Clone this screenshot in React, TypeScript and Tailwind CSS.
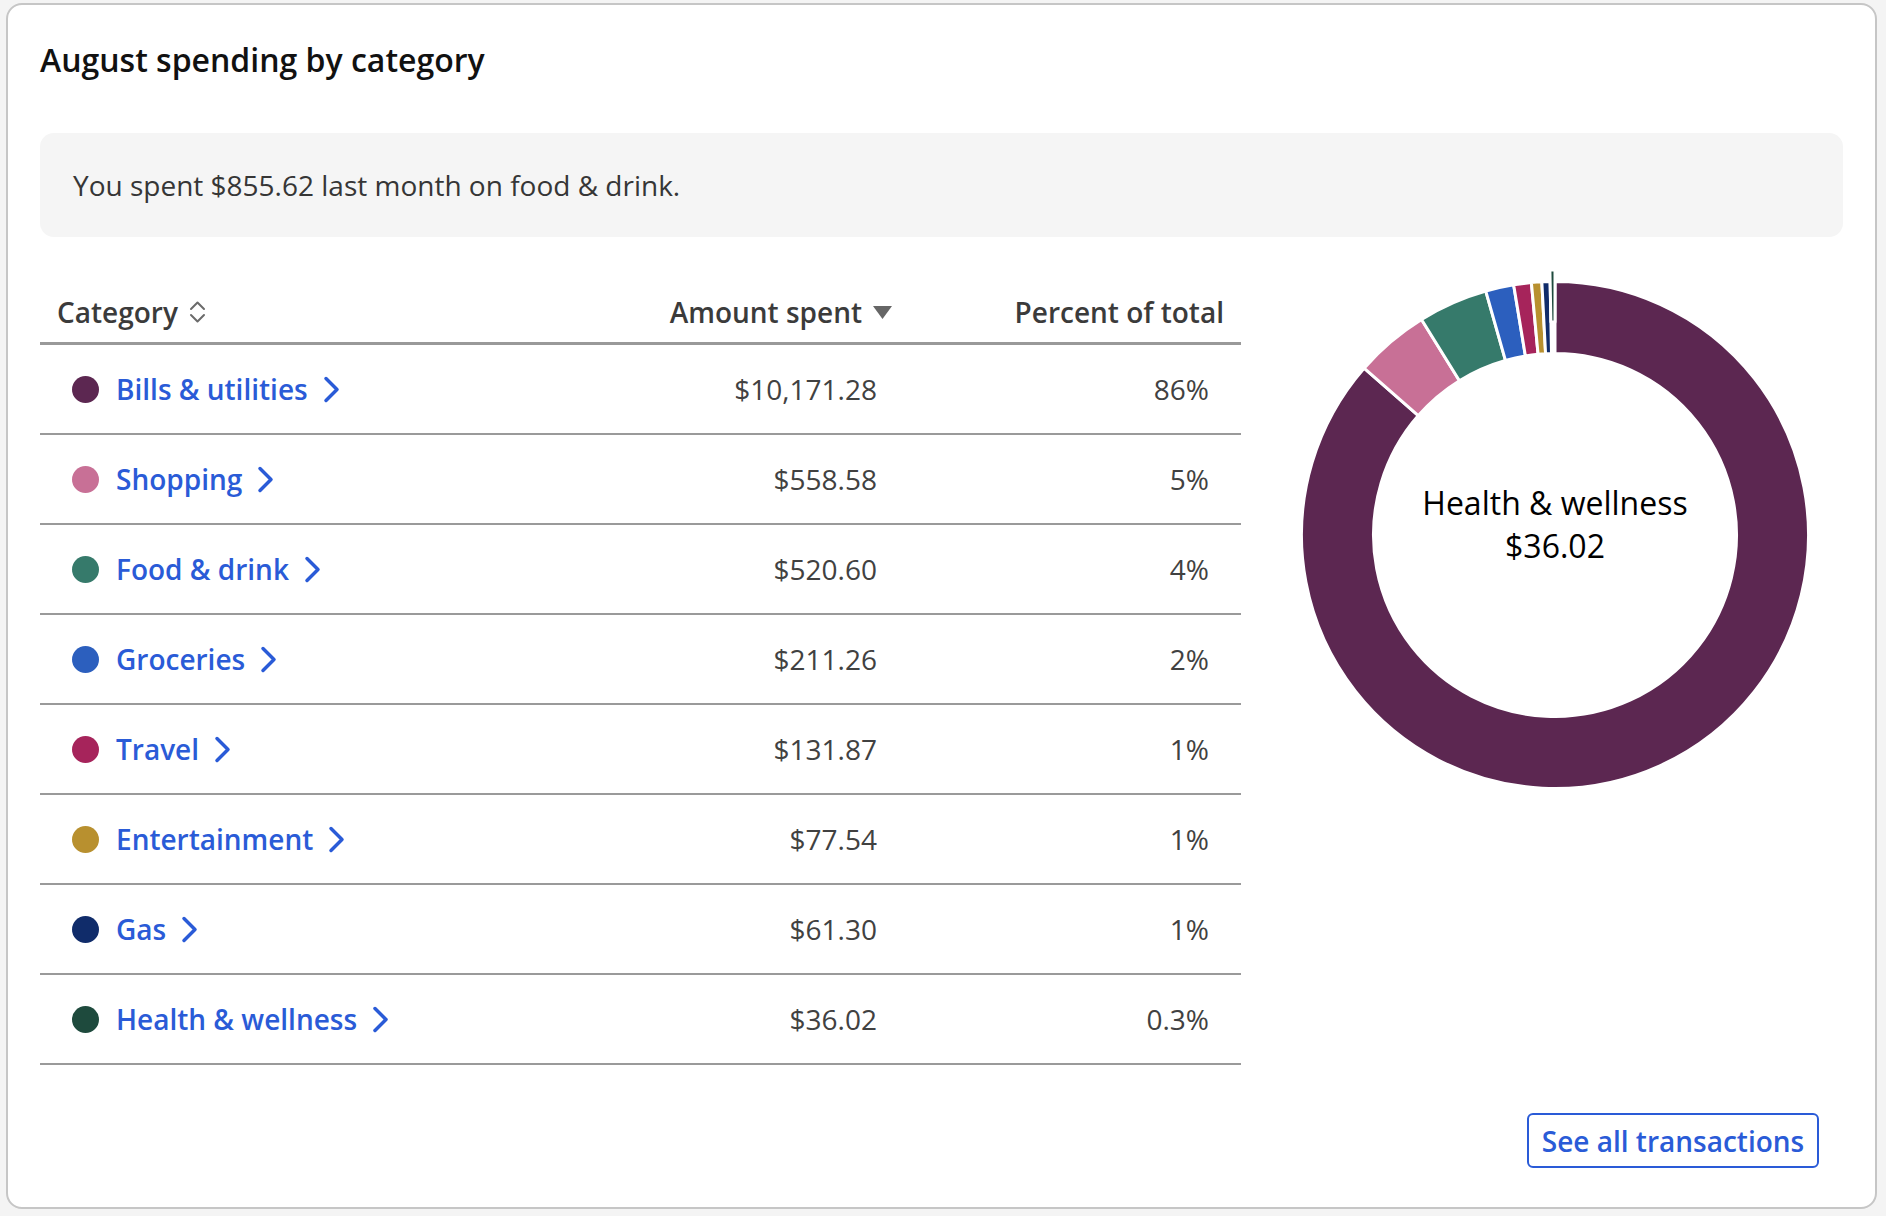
import React from "react";

const categories = [
  { name: "Bills & utilities", amount: "$10,171.28", value: 10171.28, pct: "86%", color: "#5c2751" },
  { name: "Shopping", amount: "$558.58", value: 558.58, pct: "5%", color: "#c87096" },
  { name: "Food & drink", amount: "$520.60", value: 520.6, pct: "4%", color: "#367a6b" },
  { name: "Groceries", amount: "$211.26", value: 211.26, pct: "2%", color: "#2c5fbe" },
  { name: "Travel", amount: "$131.87", value: 131.87, pct: "1%", color: "#a6245b" },
  { name: "Entertainment", amount: "$77.54", value: 77.54, pct: "1%", color: "#b8902f" },
  { name: "Gas", amount: "$61.30", value: 61.3, pct: "1%", color: "#102c6a" },
  { name: "Health & wellness", amount: "$36.02", value: 36.02, pct: "0.3%", color: "#1e4a3d" },
];

const selected = "Health & wellness";

function arcPath(cx: number, cy: number, r0: number, r1: number, a0: number, a1: number) {
  const p = (r: number, a: number) => [cx + r * Math.sin(a), cy - r * Math.cos(a)];
  const large = a1 - a0 > Math.PI ? 1 : 0;
  const [x0, y0] = p(r1, a0);
  const [x1, y1] = p(r1, a1);
  const [x2, y2] = p(r0, a1);
  const [x3, y3] = p(r0, a0);
  return `M${x0} ${y0} A${r1} ${r1} 0 ${large} 1 ${x1} ${y1} L${x2} ${y2} A${r0} ${r0} 0 ${large} 0 ${x3} ${y3} Z`;
}

function Donut() {
  const total = categories.reduce((s, c) => s + c.value, 0);
  let start = 0;
  const slices = categories.map((c) => {
    const a0 = start;
    const a1 = start + (c.value / total) * Math.PI * 2;
    start = a1;
    const active = c.name === selected;
    return {
      ...c,
      d: active ? arcPath(270, 270, 213, 265, a0, a1) : arcPath(270, 270, 181.5, 253.5, a0, a1),
    };
  });

  return (
    <div className="relative ml-[14px] h-[540px] w-[540px]">
      <svg width="540" height="540" viewBox="0 0 540 540">
        {slices.map((s) => (
          <path key={s.name} d={s.d} fill={s.color} stroke="#ffffff" strokeWidth={3} strokeLinejoin="round" />
        ))}
      </svg>
      <div className="absolute inset-0 flex flex-col items-center justify-center pb-[22px] text-[32px] leading-[43px] text-black">
        <span>Health &amp; wellness</span>
        <span>$36.02</span>
      </div>
    </div>
  );
}

function SortIcon() {
  return (
    <svg width="17" height="24" viewBox="0 0 17 24" fill="none" stroke="#6b6b6b" strokeWidth="2" strokeLinecap="round" strokeLinejoin="round">
      <polyline points="2,9 8.5,2.5 15,9" />
      <polyline points="2,15 8.5,21.5 15,15" />
    </svg>
  );
}

function Chevron() {
  return (
    <svg width="17" height="27" viewBox="0 0 17 27" fill="none" stroke="#2a5bd7" strokeWidth="3.5" strokeLinecap="round" strokeLinejoin="round">
      <polyline points="3,2.5 14,13.5 3,24.5" />
    </svg>
  );
}

export default function App() {
  return (
    <div className="min-h-screen bg-[#f4f4f4] pl-[6px] pt-[3px] font-['Open_Sans',sans-serif]">
      <div className="h-[1206px] w-[1871px] rounded-[16px] border-2 border-[#c6c6c6] bg-white px-[32px] pt-[35px]">
        <h1 className="text-[32px] font-semibold leading-[40px] text-[#111111]">August spending by category</h1>

        <div className="mt-[53px] flex h-[104px] items-center rounded-[14px] bg-[#f5f5f5] px-[33px]">
          <p className="text-[28px] leading-[40px] text-[#363636]">You spent $855.62 last month on food &amp; drink.</p>
        </div>

        <div className="mt-[28px] flex">
          <div className="w-[1201px]">
            <div className="grid h-[80px] grid-cols-[602px_266px_333px] items-end border-b-[3px] border-[#999999] pb-[10px] text-[28px] font-semibold leading-[40px] text-[#3b3b3b]">
              <div className="flex items-center gap-[11px] pl-[17px]">
                Category
                <SortIcon />
              </div>
              <div className="flex items-center justify-end gap-[11px] pr-[16px]">
                Amount spent
                <svg width="19" height="13" viewBox="0 0 19 13">
                  <polygon points="0,0 19,0 9.5,13" fill="#666666" />
                </svg>
              </div>
              <div className="pr-[17px] text-right">Percent of total</div>
            </div>

            {categories.map((c) => (
              <div
                key={c.name}
                className="grid h-[90px] grid-cols-[602px_266px_333px] items-center border-b-2 border-[#9a9a9a] text-[28px] leading-[40px]"
              >
                <div className="flex items-center pl-[32px]">
                  <span className="h-[27px] w-[27px] rounded-full" style={{ backgroundColor: c.color }} />
                  <a className="ml-[17px] flex items-center gap-[15px] font-semibold text-[#2a5bd7]">
                    {c.name}
                    <Chevron />
                  </a>
                </div>
                <div className="pr-[31px] text-right text-[#414141]">{c.amount}</div>
                <div className="pr-[32px] text-right text-[#414141]">{c.pct}</div>
              </div>
            ))}
          </div>

          <div className="ml-[30px] flex-1">
            <Donut />
          </div>
        </div>

        <div className="mt-[48px] flex justify-end pr-[24px]">
          <button className="h-[55px] w-[292px] rounded-[6px] border-2 border-[#2a5bd7] text-[28px] font-semibold leading-[40px] text-[#2a5bd7]">
            See all transactions
          </button>
        </div>
      </div>
    </div>
  );
}
